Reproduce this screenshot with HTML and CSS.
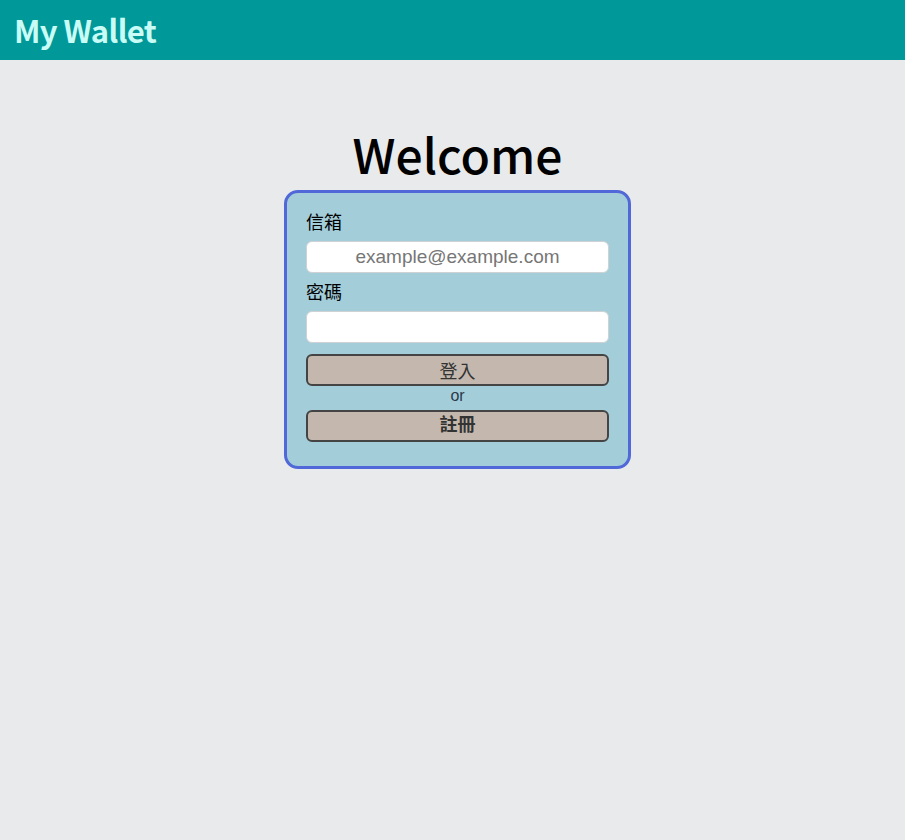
FILE: index.html
```html
<!DOCTYPE html>
<html lang="zh-Hant">
<head>
<meta charset="utf-8">
<title>My Wallet</title>
<link rel="stylesheet" href="styles.css">
</head>
<body>
<header class="topbar">
  <div class="brand">My Wallet</div>
</header>
<main class="main">
  <h1 class="title">Welcome</h1>
  <form class="card">
    <label class="label" for="email">信箱</label>
    <input class="field" id="email" type="email" placeholder="example@example.com">
    <label class="label" for="pw">密碼</label>
    <input class="field" id="pw" type="password">
    <button class="btn" type="button">登入</button>
    <div class="or">or</div>
    <button class="btn btn-bold" type="button">註冊</button>
  </form>
</main>
</body>
</html>
```

FILE: styles.css
```css
* { box-sizing: border-box; }
html, body { margin: 0; padding: 0; }
body {
  background: #e9eaec;
  font-family: "Noto Sans CJK TC", "Noto Sans", sans-serif;
  color: #000;
  min-height: 840px;
}
.topbar {
  height: 60px;
  background: #009898;
  display: flex;
  align-items: center;
  padding-left: 14px;
}
.brand {
  color: #c9fcf6;
  font-size: 31px;
  font-weight: 700;
  line-height: 1;
  letter-spacing: -0.6px;
  padding-bottom: 2px;
}
.main {
  display: flex;
  flex-direction: column;
  align-items: center;
  padding-top: 62px;
  padding-left: 10px;
}
.title {
  margin: 0;
  font-size: 48px;
  font-weight: 500;
  line-height: 62px;
  height: 68px;
}
.card {
  width: 347px;
  background: #a3cdd9;
  border: 3px solid #5068d8;
  border-radius: 14px;
  padding: 14px 19px 24px 19px;
  display: flex;
  flex-direction: column;
}
.label {
  font-size: 18px;
  line-height: 28px;
  margin-bottom: 6px;
}
.field {
  height: 32px;
  width: 100%;
  border: 1px solid #cfd2d4;
  border-radius: 6px;
  background: #fff;
  font-family: "Liberation Sans", Arial, sans-serif;
  font-size: 19px;
  text-align: center;
  color: #333;
  margin: 0 0 4px 0;
  padding: 0 8px;
}
.field::placeholder { color: #767676; }
#pw { margin-bottom: 11px; }
.btn {
  height: 32px;
  width: 100%;
  border: 2px solid #444;
  border-radius: 6px;
  background: #c4b8ae;
  color: #333;
  font-family: "Noto Sans CJK TC", sans-serif;
  font-size: 18px;
  line-height: 1;
  padding: 0;
  margin: 0;
}
.btn-bold { font-weight: 700; padding-bottom: 6px; }
.or {
  text-align: center;
  font-family: "Liberation Sans", Arial, sans-serif;
  font-size: 16px;
  line-height: 20px;
  padding-bottom: 4px;
  color: #2b3a4a;
}
```
